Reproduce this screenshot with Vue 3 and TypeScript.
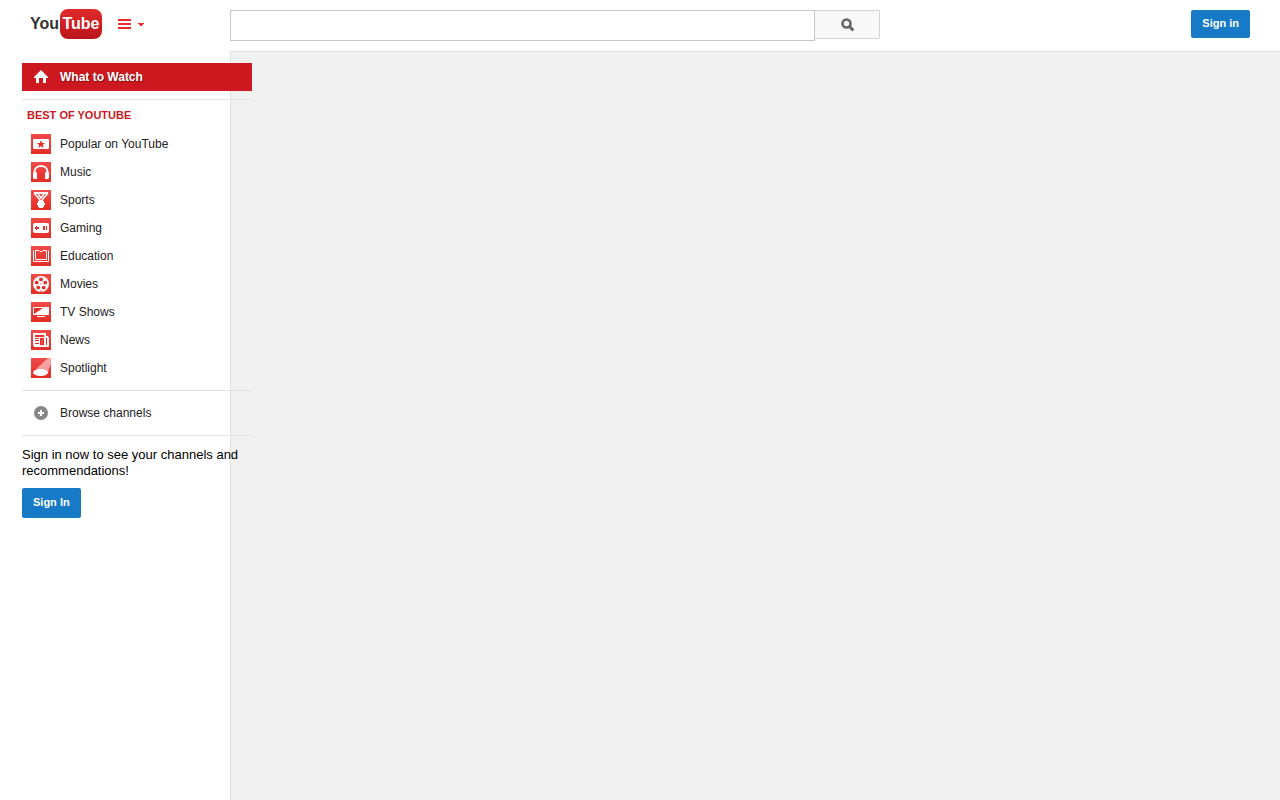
<script setup lang="ts">
import { ref } from 'vue'

interface Channel {
  id: string
  label: string
}

const query = ref('')
const channels: Channel[] = [
  { id: 'popular', label: 'Popular on YouTube' },
  { id: 'music', label: 'Music' },
  { id: 'sports', label: 'Sports' },
  { id: 'gaming', label: 'Gaming' },
  { id: 'education', label: 'Education' },
  { id: 'movies', label: 'Movies' },
  { id: 'tv', label: 'TV Shows' },
  { id: 'news', label: 'News' },
  { id: 'spotlight', label: 'Spotlight' },
]
</script>

<template>
  <div class="page">
    <header class="masthead">
      <div class="brand">
        <a class="logo" href="#"><span class="you">You</span><span class="tube">Tube</span></a>
        <button class="guide-toggle" type="button" aria-label="Guide">
          <svg width="26" height="10" viewBox="0 0 26 10" shape-rendering="crispEdges" fill="#e62d27">
            <path d="M0 0h13v2H0zM0 4h13v2H0zM0 8h13v2H0zM20 4h6v1h-1v1h-1v1h-2V6h-1V5h-1z" />
          </svg>
        </button>
      </div>
      <form class="search" @submit.prevent>
        <input v-model="query" type="text" aria-label="Search" />
        <button type="submit" aria-label="Search">
          <svg width="13" height="14" viewBox="0 0 13 14" fill="none" stroke="#666">
            <circle cx="5.5" cy="5.5" r="4" stroke-width="2.6" />
            <path d="M8 8l4.400 4.400" stroke-width="3" />
          </svg>
        </button>
      </form>
      <button class="primary" type="button">Sign in</button>
    </header>

    <div class="body">
      <aside class="sidebar">
        <nav class="guide">
          <a class="item active" href="#">
            <svg class="icon" viewBox="0 0 20 20" fill="#fff">
              <path d="M10 3L3 10v1h2v5h3v-5h4v5h3v-5h2v-1z" />
            </svg>
            What to Watch
          </a>
          <hr />
          <h3>Best of YouTube</h3>
          <ul>
            <li v-for="c in channels" :key="c.id">
              <a class="item" href="#">
                <svg class="icon tile" viewBox="0 0 20 20" fill="#fff">
                  <template v-if="c.id === 'popular'">
                    <rect x="2" y="5" width="16" height="10" rx="1" />
                    <path fill="#e62d27" d="M10 6l1.200 3H14l-2.200 2 .9 3-2.700-1.800L7.300 14l.9-3L6 9h2.800z" />
                  </template>
                  <template v-else-if="c.id === 'music'">
                    <path d="M3.500 12V10C3.500 2 16.500 2 16.500 10V12" fill="none" stroke="#fff" stroke-width="2" />
                    <path d="M3 10h2l1 1v6H3l-1-1v-5zM17 10h-2l-1 1v6h3l1-1v-5z" />
                  </template>
                  <template v-else-if="c.id === 'sports'">
                    <path d="M3 2h14v2H3z" />
                    <path d="M3 3l6 7M17 3l-6 7M7 4l3 4 3-4" fill="none" stroke="#fff" stroke-width="1.500" />
                    <path d="M8 10h4v1h1v2h1v2h-1v2h-1v1H8v-1H7v-2H6v-2h1v-2h1z" />
                  </template>
                  <template v-else-if="c.id === 'gaming'">
                    <rect x="2" y="5" width="16" height="10" rx="2" />
                    <path shape-rendering="crispEdges" fill="#e62d27" d="M5 8h1v1h2v2H6v1H5v-1H4V9h1zM12 8h2v4h-2zM15 8h1v4h-1z" />
                  </template>
                  <template v-else-if="c.id === 'education'">
                    <path d="M2.500 4.500v11h15v-11M4.500 5v8.500h11V4.500H12l-1 1H9l-1-1H4" fill="none" stroke="#fff" />
                  </template>
                  <template v-else-if="c.id === 'movies'">
                    <circle cx="10" cy="10" r="8" />
                    <g fill="#e62d27">
                      <circle cx="10" cy="5.400" r="1.900" />
                      <circle cx="14.300" cy="8.600" r="1.900" />
                      <circle cx="12.700" cy="13.600" r="1.900" />
                      <circle cx="7.300" cy="13.600" r="1.900" />
                      <circle cx="5.700" cy="8.600" r="1.900" />
                      <path d="M9.500 9.500h1v1h-1zM9.500 16.500h1V18h-1z" />
                    </g>
                  </template>
                  <template v-else-if="c.id === 'tv'">
                    <path shape-rendering="crispEdges" d="M2 5h16v8H2zM6 14h8v1H6z" />
                    <path fill="#e62d27" d="M3 6h9l-9 6z" />
                  </template>
                  <template v-else-if="c.id === 'news'">
                    <g shape-rendering="crispEdges">
                      <path d="M2 3h13v3h2v1h1v10H3v-1H2z" />
                      <path fill="#e62d27" d="M4 5h9v2H4zM4 8h4v1H4zM4 10h4v1H4zM4 13h4v1H4zM9 8h4v7H9zM15 8h1v7h-1z" />
                      <path d="M10 9h2v5h-2z" fill="#f04a48" />
                    </g>
                  </template>
                  <template v-else>
                    <path d="M17 0h3v6l-3 8L5 11z" opacity=".5" />
                    <ellipse cx="9.500" cy="14.500" rx="7.500" ry="3.500" />
                  </template>
                </svg>
                {{ c.label }}
              </a>
            </li>
          </ul>
          <hr />
          <a class="item" href="#">
            <svg class="icon" viewBox="0 0 20 20">
              <circle cx="10" cy="10" r="7" fill="#888" />
              <path d="M9 7h2v2h2v2h-2v2H9v-2H7V9h2z" fill="#fff" />
            </svg>
            Browse channels
          </a>
          <hr />
          <p>Sign in now to see your channels and recommendations!</p>
          <button class="primary tall" type="button">Sign In</button>
        </nav>
      </aside>
      <main class="content"></main>
    </div>
  </div>
</template>

<style>
body {
  margin: 0;
  background: #fff;
}
</style>

<style scoped>
.page {
  display: flex;
  flex-direction: column;
  min-height: 100vh;
  font-family: "Liberation Sans", Arial, sans-serif;
  font-size: 13px;
  color: #000;
}
.masthead {
  display: flex;
  align-items: flex-start;
  height: 51px;
  padding-right: 30px;
}
.brand {
  display: flex;
  flex: none;
  box-sizing: border-box;
  width: 230px;
  padding: 9px 0 0 30px;
}
.logo {
  display: flex;
  align-items: center;
  width: 72px;
  height: 30px;
  font: bold 16px/30px "Liberation Sans", Arial, sans-serif;
  text-decoration: none;
}
.you {
  flex: none;
  width: 30px;
  color: #333;
}
.tube {
  flex: none;
  width: 42px;
  height: 30px;
  border-radius: 8px;
  background: linear-gradient(#e02a2a, #bb141b);
  color: #fff;
  text-align: center;
}
.guide-toggle {
  display: flex;
  align-items: center;
  height: 30px;
  margin-left: 16px;
  padding: 0;
  border: 0;
  background: none;
}
.search {
  display: flex;
  flex: 0 1 650px;
  align-items: flex-start;
  margin-top: 10px;
}
.search input {
  flex: 1;
  min-width: 0;
  box-sizing: border-box;
  height: 31px;
  padding: 0 8px;
  border: 1px solid #c6c6c6;
  background: #fff;
  font: 16px "Liberation Sans", Arial, sans-serif;
  outline: none;
}
.search button {
  display: flex;
  align-items: center;
  justify-content: center;
  box-sizing: border-box;
  width: 65px;
  height: 29px;
  padding: 0;
  border: 1px solid #d3d3d3;
  border-left: 0;
  border-radius: 0 2px 2px 0;
  background: #f8f8f8;
}
.primary {
  height: 28px;
  padding: 0 11px 2px;
  border: 0;
  border-radius: 2px;
  background: #167ac6;
  color: #fff;
  font: bold 11px "Liberation Sans", Arial, sans-serif;
}
.masthead .primary {
  margin: 10px 0 0 auto;
}
.primary.tall {
  height: 30px;
}
.body {
  display: flex;
  flex: 1;
}
.sidebar {
  position: relative;
  z-index: 1;
  flex: none;
  box-sizing: border-box;
  width: 230px;
  padding: 12px 0 0 22px;
}
.guide {
  width: 230px;
}
.content {
  flex: 1;
  border-top: 1px solid #e2e2e2;
  border-left: 1px solid #e2e2e2;
  background: #f1f1f1;
}
.item {
  display: flex;
  align-items: center;
  gap: 9px;
  height: 28px;
  padding-left: 9px;
  color: #222;
  font-size: 12px;
  text-decoration: none;
}
.item.active {
  background: #cc181e;
  color: #fff;
  font-weight: bold;
  text-shadow: 1px 1px 1px rgba(0, 0, 0, 0.4);
}
.icon {
  flex: none;
  width: 20px;
  height: 20px;
}
.tile {
  background: linear-gradient(#f04a48, #e62d27);
}
hr {
  height: 1px;
  margin: 8px 0;
  border: 0;
  background: #e2e2e2;
}
h3 {
  margin: -8px 0 0 5px;
  color: #cc181e;
  font-size: 11px;
  line-height: 30px;
  text-transform: uppercase;
}
ul {
  margin: 0;
  padding: 0;
  list-style: none;
}
p {
  margin: 11px 0 9px;
  line-height: 16px;
}
</style>
